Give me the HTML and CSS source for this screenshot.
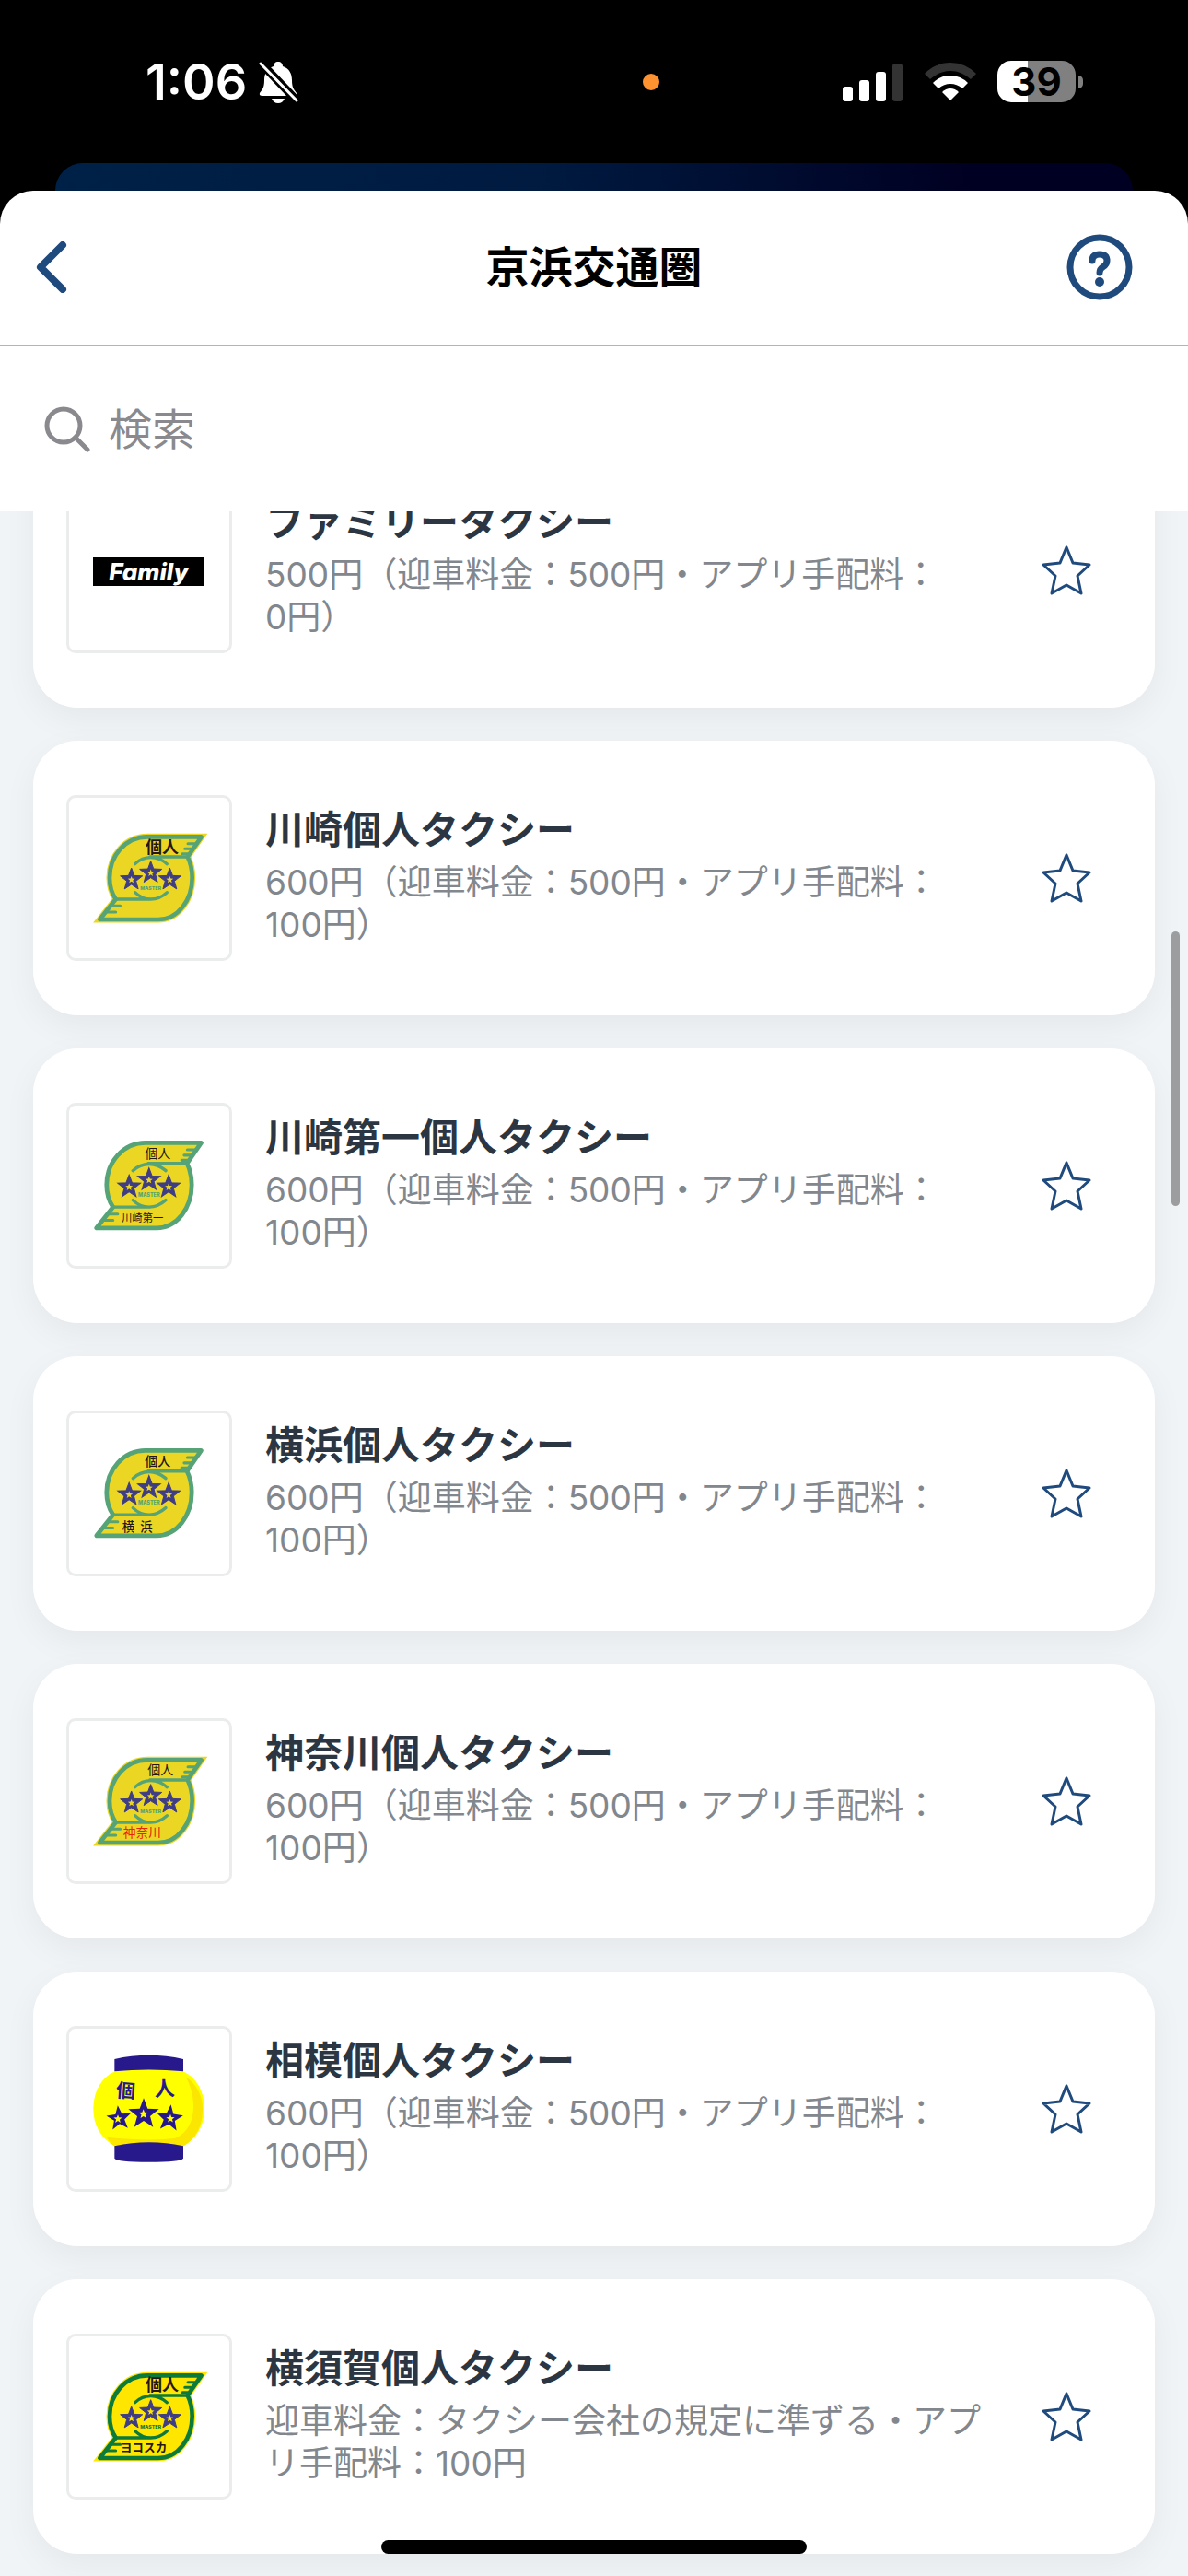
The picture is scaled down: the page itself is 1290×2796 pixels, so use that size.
FILE: index.html
```html
<!DOCTYPE html>
<html lang="ja">
<head>
    <meta charset="UTF-8">
    <meta name="viewport" content="width=device-width, initial-scale=1.0">
    <title>京浜交通圏</title>
    <link rel="stylesheet" href="styles.css">
</head>
<body>
    <!-- Shared logo parts -->
    <svg class="defs" width="0" height="0" aria-hidden="true">
        <defs>
            <path id="star" d="M0-38L9.4-12.9 36.1-11.7 15.2 4.9 22.3 30.7 0 16-22.3 30.7-15.2 4.9-36.1-11.7-9.4-12.9Z"/>
            <path id="leafShape" d="M446 145H270C200 145 147 205 147 278C147 305 155 330 167 348L115 414H305C370 414 416 350 416 278C416 252 411 230 401 210Z"/>
            <g id="leaf">
                <use href="#leafShape" class="leaf-body"/>
                <path class="leaf-line" d="M401 210H278M230 233Q252 212 281 212T334 233M167 348H285M230 326Q252 348 281 348T334 326"/>
                <path class="leaf-fin" d="M402 167H432M392 184H420M384 200H408M152 370H182M138 390H167"/>
                <use href="#star" class="leaf-star" x="218" y="284"/>
                <use href="#star" class="leaf-star" x="281" y="262"/>
                <use href="#star" class="leaf-star" x="343" y="284"/>
                <use href="#star" class="leaf-dot" transform="translate(218 285) scale(.32)"/>
                <use href="#star" class="leaf-dot" transform="translate(281 263) scale(.32)"/>
                <use href="#star" class="leaf-dot" transform="translate(343 285) scale(.32)"/>
                <text class="leaf-master" x="281" y="317">MASTER</text>
            </g>
        </defs>
    </svg>

    <!-- Status bar -->
    <div class="status-bar">
        <div class="status-left">
            <span class="time">1:06</span>
            <svg class="bell" viewBox="0 0 44 46">
                <path fill="#fff" d="M22 1C25 1 27 3 27 6C34 8 37 14 37 21C37 29 39 31 42 35Q43 38 39 38H5Q1 38 2 35C5 31 7 29 7 21C7 14 10 8 17 6C17 3 19 1 22 1ZM15 41H29Q27 46 22 46Q17 46 15 41Z"/>
                <path stroke="#000" stroke-width="9" d="M2 1L43 44"/>
                <path stroke="#fff" stroke-width="3" stroke-linecap="round" d="M3 3L42 43"/>
            </svg>
        </div>
        <span class="mic-dot"></span>
        <div class="status-right">
            <svg class="signal" viewBox="0 0 66 42">
                <rect x="0" y="26" width="11" height="16" rx="3" fill="#fff"/>
                <rect x="18" y="19" width="11" height="23" rx="3" fill="#fff"/>
                <rect x="36" y="10" width="11" height="32" rx="3" fill="#fff"/>
                <rect x="54" y="1" width="11" height="41" rx="3" fill="#333"/>
            </svg>
            <svg class="wifi" viewBox="0 0 58 42">
                <path fill="#333" d="M1 12Q13 0 29 0T57 12L51 18Q41 9 29 9T7 18Z"/>
                <path fill="#fff" d="M10 22Q18 14 29 14T48 22L42 28Q36 23 29 23T16 28Z"/>
                <path fill="#fff" d="M20 32Q24 28 29 28T38 32L29 41Z"/>
            </svg>
            <div class="battery"><span class="battery-level">39</span></div>
        </div>
    </div>
    <div class="back-sheet"></div>

    <main class="sheet">
        <header class="nav">
            <button class="nav-button" type="button" aria-label="戻る">
                <svg class="back-icon" viewBox="0 0 34 56"><path d="M29 4L5 28L29 52"/></svg>
            </button>
            <h1>京浜交通圏</h1>
            <button class="nav-button help" type="button" aria-label="ヘルプ">
                <svg class="help-icon" viewBox="0 0 72 72">
                    <circle cx="36" cy="36" r="32"/>
                    <path d="M28 29Q28 22 36 22T44 29Q44 33 40 35.500T36 42"/>
                    <circle class="help-dot" cx="36" cy="52" r="5"/>
                </svg>
            </button>
        </header>

        <!-- Search -->
        <label class="search">
            <svg class="search-icon" viewBox="0 0 50 50"><circle cx="21" cy="21" r="18"/><path d="M34 34L47 47"/></svg>
            <input type="search" placeholder="検索" aria-label="検索">
        </label>

        <!-- Taxi list -->
        <div class="list">
            <article class="card">
                <svg class="logo" viewBox="15 18 522 522">
                    <rect x="93" y="237" width="363" height="93"/>
                    <text class="family" x="274" y="311">Family</text>
                </svg>
                <div class="info">
                    <h2>ファミリータクシー</h2>
                    <p>500円（迎車料金：500円・アプリ手配料：<span class="fee">0円）</span></p>
                </div>
                <button class="favorite" type="button" aria-label="お気に入り"><svg viewBox="0 0 54 54"><path d="M27 2L34 19L52 21L39 33L43 52L27 43L11 52L15 33L2 21L20 19Z"/></svg></button>
            </article>

            <article class="card">
                <svg class="logo" viewBox="15 18 522 522">
                    <use href="#leafShape" class="leaf-halo"/>
                    <use href="#leaf"/>
                    <text class="kanji bold" x="318" y="197" font-size="54">個人</text>
                </svg>
                <div class="info">
                    <h2>川崎個人タクシー</h2>
                    <p>600円（迎車料金：500円・アプリ手配料：<span class="fee">100円）</span></p>
                </div>
                <button class="favorite" type="button" aria-label="お気に入り"><svg viewBox="0 0 54 54"><path d="M27 2L34 19L52 21L39 33L43 52L27 43L11 52L15 33L2 21L20 19Z"/></svg></button>
            </article>

            <article class="card">
                <svg class="logo" viewBox="15 15 522 522">
                    <use href="#leaf" transform="translate(-14 -13) scale(1.03)"/>
                    <text class="kanji" x="304" y="186" font-size="42">個人</text>
                    <text class="kanji" x="254" y="394" font-size="34">川崎第一</text>
                </svg>
                <div class="info">
                    <h2>川崎第一個人タクシー</h2>
                    <p>600円（迎車料金：500円・アプリ手配料：<span class="fee">100円）</span></p>
                </div>
                <button class="favorite" type="button" aria-label="お気に入り"><svg viewBox="0 0 54 54"><path d="M27 2L34 19L52 21L39 33L43 52L27 43L11 52L15 33L2 21L20 19Z"/></svg></button>
            </article>

            <article class="card">
                <svg class="logo" viewBox="15 12 522 522">
                    <use href="#leaf" transform="translate(-14 -16) scale(1.03)"/>
                    <text class="kanji medium" x="304" y="183" font-size="42">個人</text>
                    <text class="kanji medium" x="208" y="396" font-size="40">横</text>
                    <text class="kanji medium" x="267" y="396" font-size="40">浜</text>
                </svg>
                <div class="info">
                    <h2>横浜個人タクシー</h2>
                    <p>600円（迎車料金：500円・アプリ手配料：<span class="fee">100円）</span></p>
                </div>
                <button class="favorite" type="button" aria-label="お気に入り"><svg viewBox="0 0 54 54"><path d="M27 2L34 19L52 21L39 33L43 52L27 43L11 52L15 33L2 21L20 19Z"/></svg></button>
            </article>

            <article class="card">
                <svg class="logo" viewBox="15 18 522 522">
                    <use href="#leafShape" class="leaf-halo"/>
                    <use href="#leaf"/>
                    <text class="kanji" x="313" y="191" font-size="42">個人</text>
                    <text class="kanji red" x="253" y="395" font-size="41">神奈川</text>
                </svg>
                <div class="info">
                    <h2>神奈川個人タクシー</h2>
                    <p>600円（迎車料金：500円・アプリ手配料：<span class="fee">100円）</span></p>
                </div>
                <button class="favorite" type="button" aria-label="お気に入り"><svg viewBox="0 0 54 54"><path d="M27 2L34 19L52 21L39 33L43 52L27 43L11 52L15 33L2 21L20 19Z"/></svg></button>
            </article>

            <article class="card">
                <!-- Lantern logo -->
                <svg class="logo lantern" viewBox="15 21 522 522">
                    <path fill="#ff0" d="M164 160Q275 148 386 160C430 180 456 225 456 283C456 335 430 380 386 404H164C120 380 94 335 94 283C94 225 120 180 164 160Z"/>
                    <path fill="#fae600" d="M395 178C435 250 430 350 360 378Q270 388 138 374Q150 395 164 404H386C430 380 450 335 450 283C450 240 430 200 395 178Z"/>
                    <path d="M163 120Q275 95 387 120V160Q275 149 163 160ZM163 403Q275 378 387 403V443Q380 455 275 455T163 443Z"/>
                    <text class="kanji" transform="rotate(4 200 222)" x="200" y="245" font-size="62">個</text>
                    <text class="kanji" transform="rotate(-3 326 218)" x="326" y="240" font-size="66">人</text>
                    <use href="#star" transform="translate(178 313) rotate(-6) scale(1.12)"/>
                    <use href="#star" transform="translate(258 299) scale(1.38)"/>
                    <use href="#star" transform="translate(342 313) rotate(6) scale(1.2)"/>
                    <use href="#star" class="leaf-dot" transform="translate(174 315) scale(.38)"/>
                    <use href="#star" class="leaf-dot" transform="translate(257 299) scale(.42)"/>
                    <use href="#star" class="leaf-dot" transform="translate(345 314) scale(.38)"/>
                </svg>
                <div class="info">
                    <h2>相模個人タクシー</h2>
                    <p>600円（迎車料金：500円・アプリ手配料：<span class="fee">100円）</span></p>
                </div>
                <button class="favorite" type="button" aria-label="お気に入り"><svg viewBox="0 0 54 54"><path d="M27 2L34 19L52 21L39 33L43 52L27 43L11 52L15 33L2 21L20 19Z"/></svg></button>
            </article>

            <article class="card">
                <svg class="logo vivid" viewBox="15 18 522 522">
                    <use href="#leafShape" class="leaf-halo"/>
                    <use href="#leaf"/>
                    <text class="kanji bold" x="318" y="196" font-size="54">個人</text>
                    <text class="kanji bold" x="258" y="394" font-size="38">ヨコスカ</text>
                </svg>
                <div class="info">
                    <h2>横須賀個人タクシー</h2>
                    <p>迎車料金：タクシー会社の規定に準ずる・アプリ手配料：100円</p>
                </div>
                <button class="favorite" type="button" aria-label="お気に入り"><svg viewBox="0 0 54 54"><path d="M27 2L34 19L52 21L39 33L43 52L27 43L11 52L15 33L2 21L20 19Z"/></svg></button>
            </article>
        </div>
    </main>

    <div class="scroll-thumb"></div>
    <div class="home-indicator"></div>
</body>
</html>
```
FILE: styles.css
```css
* {
    box-sizing: border-box;
}

body {
    position: relative;
    display: flex;
    flex-direction: column;
    height: 100vh;
    margin: 0;
    overflow: hidden;
    background: #000;
    font-family: Inter, "Noto Sans CJK JP", sans-serif;
}

button {
    padding: 0;
    border: none;
    background: none;
    cursor: pointer;
}

svg {
    display: block;
}

.defs {
    position: absolute;
}

/* Status bar */
.status-bar {
    display: grid;
    grid-template-columns: 27fr 18px 23fr;
    align-items: center;
    flex: none;
    height: 177px;
    padding: 0 114px 0 158px;
    color: #fff;
}

.status-left, .status-right {
    display: flex;
    align-items: center;
}

.status-left {
    gap: 12px;
}

.time {
    font-size: 54px;
    font-weight: 600;
}

.bell {
    width: 44px;
    height: 46px;
}

.mic-dot {
    width: 18px;
    height: 18px;
    border-radius: 50%;
    background: #ff9230;
}

.status-right {
    justify-content: flex-end;
    gap: 22px;
}

.signal {
    width: 66px;
    height: 42px;
}

.wifi {
    width: 58px;
    height: 42px;
}

.battery {
    display: flex;
    align-items: center;
    gap: 3px;
}

.battery-level {
    width: 85px;
    height: 45px;
    border-radius: 15px;
    background: linear-gradient(to right, #fff 39%, #808080 39%);
    color: #000;
    font-size: 42px;
    font-weight: 700;
    line-height: 45px;
    text-align: center;
}

.battery::after {
    content: "";
    width: 5px;
    height: 14px;
    border-radius: 0 5px 5px 0;
    background: #808080;
}

/* Sheets */
.back-sheet {
    flex: none;
    height: 60px;
    margin: 0 60px -30px;
    border-radius: 30px 30px 0 0;
    background: linear-gradient(to right, #002147, #001a40 45%, #000022 85%);
}

.sheet {
    display: flex;
    flex: 1;
    flex-direction: column;
    min-height: 0;
    border-radius: 36px 36px 0 0;
    background: #fff;
    overflow: hidden;
}

.nav {
    display: grid;
    grid-template-columns: 1fr auto 1fr;
    align-items: center;
    flex: none;
    height: 169px;
    padding: 0 60px 2px 39px;
    border-bottom: 2px solid #b4b4b6;
}

.nav h1 {
    margin: 0;
    padding-left: 21px;
    color: #000;
    font-size: 47px;
    font-weight: 700;
    line-height: 60px;
}

.nav-button {
    justify-self: start;
}

.help {
    justify-self: end;
}

.back-icon, .help-icon {
    fill: none;
    stroke: #1f4a7d;
    stroke-width: 8;
    stroke-linecap: round;
    stroke-linejoin: round;
}

.back-icon {
    width: 34px;
    height: 56px;
}

.help-icon {
    width: 72px;
    height: 72px;
    stroke-width: 7;
}

.help-dot {
    fill: #1f4a7d;
    stroke: none;
}

.search {
    display: flex;
    align-items: center;
    flex: none;
    gap: 20px;
    height: 179px;
    padding: 0 48px;
}

.search-icon {
    flex: none;
    width: 50px;
    height: 50px;
    fill: none;
    stroke: #8a8a8e;
    stroke-width: 5;
    stroke-linecap: round;
}

.search input {
    flex: 1;
    padding: 0;
    border: none;
    outline: none;
    background: none;
    font-family: inherit;
    font-size: 47px;
}

.search input::placeholder {
    color: #8a8a8e;
}

/* Taxi list */
.list {
    display: flex;
    flex: 1;
    flex-direction: column;
    justify-content: flex-end;
    gap: 36px;
    min-height: 0;
    padding: 0 36px 24px;
    background: #f0f4f7;
    overflow: hidden;
}

.card {
    display: flex;
    align-items: center;
    flex: none;
    padding: 59px 63px 59px 36px;
    border-radius: 48px;
    background: #fff;
    box-shadow: 0 12px 36px rgba(0, 0, 0, 0.05);
}

.logo {
    flex: none;
    width: 180px;
    height: 180px;
    border: 3px solid #ebecec;
    border-radius: 10px;
}

.info {
    flex: 1;
    margin: 0 45px 0 36px;
    padding-bottom: 4px;
}

.info h2 {
    margin: 0 0 8px;
    color: #2c3642;
    font-size: 42px;
    font-weight: 700;
    line-height: 52px;
}

.info p {
    margin: 0;
    color: #82878e;
    font-size: 37px;
    line-height: 46px;
}

.fee {
    white-space: nowrap;
}

.favorite svg {
    width: 66px;
    height: 66px;
    padding: 6px;
    fill: none;
    stroke: #1f4a7d;
    stroke-width: 3;
    stroke-linejoin: round;
}

/* Logos */
.logo {
    --leaf: #ebd723;
    --line: #55a377;
}

.vivid {
    --leaf: #ffe600;
    --line: #0b7a3b;
}

.lantern {
    --leaf: #ff0;
    fill: #27198c;
}

.leaf-body {
    fill: var(--leaf);
    stroke: var(--line);
    stroke-width: 14;
    stroke-linejoin: round;
}

.leaf-halo {
    fill: none;
    stroke: var(--leaf);
    stroke-width: 21;
}

.leaf-line, .leaf-fin {
    fill: none;
    stroke: var(--line);
    stroke-width: 10;
    stroke-linecap: round;
}

.leaf-fin {
    stroke-width: 9;
}

.leaf-star {
    fill: #3f3d84;
    stroke: #3f3d84;
    stroke-width: 3;
}

.leaf-dot {
    fill: var(--leaf);
}

.leaf-master {
    fill: var(--line);
    font-size: 16px;
    font-weight: 800;
    text-anchor: middle;
}

.kanji {
    fill: #231815;
    font-family: "Noto Sans CJK JP", sans-serif;
    text-anchor: middle;
}

.medium {
    font-weight: 500;
}

.bold {
    font-weight: 700;
}

.red {
    fill: #e8200c;
}

.lantern .kanji {
    fill: #27198c;
    font-weight: 700;
}

.family {
    fill: #fff;
    font-size: 78px;
    font-style: italic;
    font-weight: 800;
    text-anchor: middle;
}

.scroll-thumb {
    position: absolute;
    top: 1011px;
    right: 9px;
    width: 9px;
    height: 298px;
    border-radius: 5px;
    background: #9c9d9f;
}

.home-indicator {
    position: absolute;
    bottom: 24px;
    left: 50%;
    width: 462px;
    height: 15px;
    margin-left: -231px;
    border-radius: 8px;
    background: #000;
}
```
